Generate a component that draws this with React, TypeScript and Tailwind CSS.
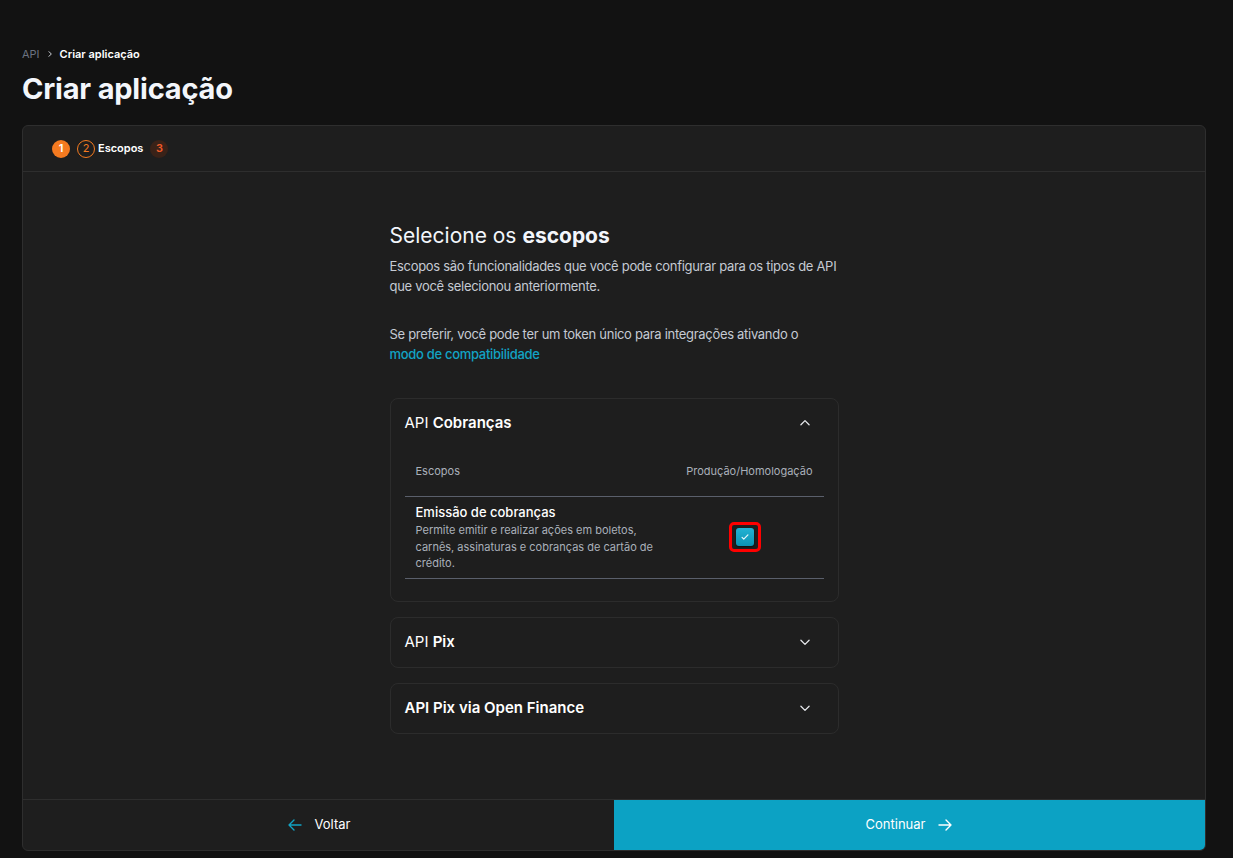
import React from "react";

function ChevronUp() {
  return (
    <svg width="14" height="14" viewBox="0 0 24 24" fill="none" stroke="currentColor" strokeWidth="2.2" strokeLinecap="round" strokeLinejoin="round">
      <path d="M5 15l7-7 7 7" />
    </svg>
  );
}
function ChevronDown() {
  return (
    <svg width="14" height="14" viewBox="0 0 24 24" fill="none" stroke="currentColor" strokeWidth="2.2" strokeLinecap="round" strokeLinejoin="round">
      <path d="M5 9l7 7 7-7" />
    </svg>
  );
}

function Collapsed({ title }: { title: React.ReactNode }) {
  return (
    <div className="rounded-lg border border-[#2c2c2c] h-[51px] flex items-center justify-between pl-[14px] pr-[26px]">
      <div className="text-[15px] text-white">{title}</div>
      <span className="text-[#e6e8ec]"><ChevronDown /></span>
    </div>
  );
}

export default function App() {
  return (
    <div className="min-h-[858px] bg-[#121212] text-white" style={{ fontFamily: "Inter, 'Noto Sans', sans-serif" }}>
      <div className="px-[22px] pt-[46px] pb-[8px]">
        <div className="flex items-center gap-[6px] text-[11px] leading-[16px]">
          <span className="text-[#6b7280]">API</span>
          <svg width="8" height="8" viewBox="0 0 24 24" fill="none" stroke="#d1d5db" strokeWidth="3" strokeLinecap="round" strokeLinejoin="round"><path d="M9 5l7 7-7 7" /></svg>
          <span className="font-semibold text-white">Criar aplicação</span>
        </div>
        <h1 className="mt-[10px] text-[29px] leading-[34px] font-bold text-[#f3f6fb] tracking-[-0.2px]">Criar aplicação</h1>
      </div>
      <div className="ml-[22px] mr-[27px] mt-[11px] rounded-md border border-[#2e2e2e] bg-[#1e1e1e] flex flex-col h-[726px] overflow-hidden">
        <div className="h-[46px] border-b border-[#2e2e2e] flex items-center pl-[29px] gap-[7px] shrink-0">
          <span className="w-[18px] h-[18px] rounded-full bg-[#f47a20] text-white text-[11px] font-semibold flex items-center justify-center">1</span>
          <span className="w-[18px] h-[18px] rounded-full border border-[#f47a20] text-[#f47a20] text-[11px] flex items-center justify-center">2</span>
          <span className="text-[11px] font-semibold text-white -ml-[4px]">Escopos</span>
          <span className="w-[18px] h-[18px] rounded-full bg-[#3a2218] text-[#f05a28] text-[11px] font-semibold flex items-center justify-center">3</span>
        </div>
        <div className="flex-1 flex justify-center">
          <div className="w-[449px] pt-[50px]">
            <h2 className="text-[21px] leading-[28px] text-[#f3f6fb]">Selecione os <span className="font-bold">escopos</span></h2>
            <p className="mt-[6px] text-[13px] leading-[20px] text-[#c5cad3] tracking-[-0.3px]">Escopos são funcionalidades que você pode configurar para os tipos de API que você selecionou anteriormente.</p>
            <p className="mt-[28px] text-[13px] leading-[20px] text-[#c5cad3] tracking-[-0.3px]">Se preferir, você pode ter um token único para integrações ativando o <br /><span className="text-[#12a3c4] font-medium">modo de compatibilidade</span></p>
            <div className="mt-[34px] flex flex-col gap-[15px]">
              <div className="rounded-lg border border-[#2c2c2c] pl-[14px] pr-[14px] pb-[22px]">
                <div className="h-[48px] flex items-center justify-between pr-[12px]">
                  <div className="text-[15px] text-white">API <span className="font-semibold">Cobranças</span></div>
                  <span className="text-[#e6e8ec]"><ChevronUp /></span>
                </div>
                <div className="flex justify-between items-center h-[50px] px-[11px] text-[11px] text-[#aab0ba] border-b border-[#5a5f6b]">
                  <span>Escopos</span>
                  <span>Produção/Homologação</span>
                </div>
                <div className="flex items-center border-b border-[#5a5f6b] pt-[6px] pb-[6px] px-[11px]">
                  <div className="w-[262px]">
                    <div className="text-[13px] leading-[18px] font-medium text-white">Emissão de cobranças</div>
                    <div className="mt-[1px] text-[11px] leading-[16.5px] text-[#aab0ba]">Permite emitir e realizar ações em boletos, carnês, assinaturas e cobranças de cartão de crédito.</div>
                  </div>
                  <div className="flex-1 flex justify-center">
                    <div className="rounded-[5px] border-[3px] border-[#ff0000] py-[3px] px-[4px]">
                      <div className="w-[18px] h-[18px] rounded-[3px] bg-gradient-to-b from-[#22b3d4] to-[#0b93b3] flex items-center justify-center shadow-[0_1px_2px_rgba(0,0,0,0.6)]">
                        <svg width="10" height="10" viewBox="0 0 24 24" fill="none" stroke="#e6f7fb" strokeWidth="3" strokeLinecap="round" strokeLinejoin="round"><path d="M5 13l4 4 10-10" /></svg>
                      </div>
                    </div>
                  </div>
                </div>
              </div>
              <Collapsed title={<>API <span className="font-semibold">Pix</span></>} />
              <Collapsed title={<span className="font-semibold">API Pix via Open Finance</span>} />
            </div>
          </div>
        </div>
        <div className="h-[51px] border-t border-[#2e2e2e] flex shrink-0">
          <div className="flex-1 flex items-center justify-center gap-[12px] text-[13px] text-white">
            <svg width="16" height="14" viewBox="0 0 16 14" fill="none" stroke="#12a3c4" strokeWidth="1.4" strokeLinecap="round" strokeLinejoin="round"><path d="M14 7H2M7 2L2 7l5 5" /></svg>
            <span>Voltar</span>
          </div>
          <div className="flex-1 flex items-center justify-center gap-[12px] bg-[#0ca2c4] text-[13px] text-white">
            <span>Continuar</span>
            <svg width="16" height="14" viewBox="0 0 16 14" fill="none" stroke="#ffffff" strokeWidth="1.4" strokeLinecap="round" strokeLinejoin="round"><path d="M2 7h12M9 2l5 5-5 5" /></svg>
          </div>
        </div>
      </div>
    </div>
  );
}
